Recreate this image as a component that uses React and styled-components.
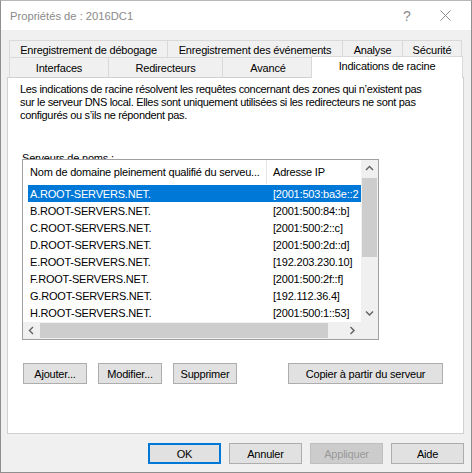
import React from "react";
import styled, { createGlobalStyle } from "styled-components";

const Global = createGlobalStyle`
  html, body { margin: 0; padding: 0; background: #ffffff; }
  body {
    font-family: "Liberation Sans", Arial, sans-serif;
    font-size: 11px;
    letter-spacing: -0.2px;
    color: #000;
  }
  * { box-sizing: border-box; }
`;

const Window = styled.div`
  width: 472px;
  height: 473px;
  border: 1px solid #8f8f8f;
  border-top-color: #b8b8b8;
  background: #f0f0f0;
  display: flex;
  flex-direction: column;
  overflow: hidden;
`;

const TitleBar = styled.div`
  height: 29px;
  flex: none;
  background: #ffffff;
  display: flex;
  align-items: center;
  padding: 0 3px 0 9px;
`;

const Title = styled.div`
  flex: 1;
  color: #8a8a8a;
  font-size: 11.2px;
  letter-spacing: 0;
`;

const CaptionButton = styled.div`
  width: ${(p) => p.$w}px;
  height: 29px;
  display: flex;
  align-items: center;
  justify-content: center;
  color: #8a8a8a;
  font-size: 14px;
  letter-spacing: 0;
`;

const Body = styled.div`
  flex: 1;
  display: flex;
  flex-direction: column;
  padding: 10px 7px 0 6px;
`;

const TabStrip = styled.div`
  display: flex;
  flex-direction: column;
  margin-left: 2px;
`;

const TabRow = styled.div`
  display: flex;
  align-items: flex-end;
  height: ${(p) => p.$h}px;
`;

const Tab = styled.div`
  width: ${(p) => p.$w}px;
  height: ${(p) => p.$h}px;
  flex: none;
  display: flex;
  align-items: center;
  justify-content: center;
  white-space: nowrap;
  padding-top: ${(p) => p.$pt || 0}px;
  background: #f0f0f0;
  border-top: 1px solid #d9d9d9;
  border-left: 1px solid #d9d9d9;
  border-right: ${(p) => (p.$last ? "1px solid #d9d9d9" : "none")};
`;

const ActiveTab = styled(Tab)`
  position: relative;
  z-index: 2;
  background: #ffffff;
  border-right: 1px solid #d9d9d9;
  margin-bottom: -1px;
  margin-left: -2px;
  padding-bottom: 3px;
`;

const Panel = styled.div`
  position: relative;
  z-index: 1;
  width: 457px;
  height: 357px;
  flex: none;
  background: #ffffff;
  border: 1px solid #d0d0d0;
  padding: 5px 12px 0 12px;
  display: flex;
  flex-direction: column;
`;

const Description = styled.p`
  margin: 0;
  line-height: 13px;
  letter-spacing: -0.33px;
  white-space: nowrap;
`;

const GroupLabel = styled.div`
  margin: 30px 0 -6px 2px;
  line-height: 13px;
`;

const ListBox = styled.div`
  position: relative;
  margin-left: 2px;
  width: 357px;
  height: 181px;
  border: 1px solid #a0a0a0;
  background: #ffffff;
  display: grid;
  grid-template-columns: 338px 17px;
  grid-template-rows: 162px 17px;
`;

const ListContent = styled.div`
  overflow: hidden;
  display: flex;
  flex-direction: column;
`;

const HeaderRow = styled.div`
  height: 24px;
  flex: none;
  display: flex;
  white-space: nowrap;
`;

const HeaderCell = styled.div`
  width: ${(p) => p.$w}px;
  flex: none;
  display: flex;
  align-items: center;
  padding-left: ${(p) => p.$pl}px;
  border-right: ${(p) => (p.$divider ? "1px solid #e5e5e5" : "none")};
`;

const Rows = styled.div`
  padding-top: 1px;
  display: flex;
  flex-direction: column;
`;

const Row = styled.div`
  height: 17px;
  flex: none;
  margin-left: 5px;
  width: 333px;
  display: flex;
  align-items: center;
  white-space: nowrap;
  overflow: hidden;
  background: ${(p) => (p.$selected ? "#0078d7" : "transparent")};
  color: ${(p) => (p.$selected ? "#ffffff" : "#000000")};
`;

const Cell = styled.div`
  width: ${(p) => p.$w}px;
  flex: none;
  overflow: hidden;
  padding-left: ${(p) => p.$pl}px;
`;

const VScroll = styled.div`
  background: #f0f0f0;
  display: flex;
  flex-direction: column;
`;

const HScroll = styled.div`
  background: #f0f0f0;
  display: flex;
`;

const Corner = styled.div`
  background: #f0f0f0;
`;

const ArrowBox = styled.div`
  width: 17px;
  height: 17px;
  flex: none;
  display: flex;
  align-items: center;
  justify-content: center;
`;

const Thumb = styled.div`
  background: #cdcdcd;
  ${(p) =>
    p.$vertical
      ? `height: ${p.$len}px; margin: 1px 1px 0 1px;`
      : `width: ${p.$len}px; margin: 1px 0 1px 0;`}
`;

const Track = styled.div`
  flex: 1;
`;

const ButtonRow = styled.div`
  display: flex;
  margin: 23px 0 0 3px;
`;

const Button = styled.div`
  width: ${(p) => p.$w}px;
  height: 21px;
  flex: none;
  margin-left: ${(p) => p.$ml || 0}px;
  display: flex;
  align-items: center;
  justify-content: center;
  white-space: nowrap;
  background: ${(p) => (p.$disabled ? "#cccccc" : "#e1e1e1")};
  color: ${(p) => (p.$disabled ? "#9a9a9a" : "#000000")};
  border: 1px solid
    ${(p) => (p.$default ? "#0078d7" : p.$disabled ? "#bfbfbf" : "#adadad")};
  box-shadow: ${(p) => (p.$default ? "inset 0 0 0 1px #0078d7" : "none")};
`;

const Footer = styled.div`
  display: flex;
  justify-content: flex-end;
  gap: 8px;
  margin-top: 9px;
`;

const Chevron = ({ dir }) => {
  const pts = {
    up: "1,5 4.5,1.5 8,5",
    down: "1,1.5 4.5,5 8,1.5",
    left: "5,1 1.5,4.5 5,8",
    right: "1.5,1 5,4.5 1.5,8",
  }[dir];
  const vertical = dir === "up" || dir === "down";
  return (
    <svg width={vertical ? 9 : 7} height={vertical ? 7 : 9} viewBox={vertical ? "0 0 9 7" : "0 0 7 9"}>
      <polyline points={pts} fill="none" stroke="#606060" strokeWidth="1.4" />
    </svg>
  );
};

const CloseGlyph = () => (
  <svg width="11" height="11" viewBox="0 0 11 11">
    <path d="M0.5 0.5 L10.5 10.5 M10.5 0.5 L0.5 10.5" stroke="#8a8a8a" strokeWidth="1" fill="none" />
  </svg>
);

const topTabs = [
  { label: "Enregistrement de débogage", w: 158 },
  { label: "Enregistrement des événements", w: 175 },
  { label: "Analyse", w: 60 },
  { label: "Sécurité", w: 60 },
];

const bottomTabs = [
  { label: "Interfaces", w: 99 },
  { label: "Redirecteurs", w: 114 },
  { label: "Avancé", w: 91 },
];

const servers = [
  ["A.ROOT-SERVERS.NET.", "[2001:503:ba3e::2"],
  ["B.ROOT-SERVERS.NET.", "[2001:500:84::b]"],
  ["C.ROOT-SERVERS.NET.", "[2001:500:2::c]"],
  ["D.ROOT-SERVERS.NET.", "[2001:500:2d::d]"],
  ["E.ROOT-SERVERS.NET.", "[192.203.230.10]"],
  ["F.ROOT-SERVERS.NET.", "[2001:500:2f::f]"],
  ["G.ROOT-SERVERS.NET.", "[192.112.36.4]"],
  ["H.ROOT-SERVERS.NET.", "[2001:500:1::53]"],
];

export default function App() {
  return (
    <>
      <Global />
      <Window>
        <TitleBar>
          <Title>Propriétés de : 2016DC1</Title>
          <CaptionButton $w={30}>?</CaptionButton>
          <CaptionButton $w={46}>
            <CloseGlyph />
          </CaptionButton>
        </TitleBar>
        <Body>
          <TabStrip>
            <TabRow $h={17}>
              {topTabs.map((t, i) => (
                <Tab key={t.label} $w={t.w} $h={17} $pt={2} $last={i === topTabs.length - 1}>
                  {t.label}
                </Tab>
              ))}
            </TabRow>
            <TabRow $h={20}>
              {bottomTabs.map((t) => (
                <Tab key={t.label} $w={t.w} $h={20} $pt={1}>
                  {t.label}
                </Tab>
              ))}
              <ActiveTab $w={152} $h={22}>
                Indications de racine
              </ActiveTab>
            </TabRow>
          </TabStrip>
          <Panel>
            <Description>
              Les indications de racine résolvent les requêtes concernant des zones qui n’existent pas
              <br />
              sur le serveur DNS local. Elles sont uniquement utilisées si les redirecteurs ne sont pas
              <br />
              configurés ou s’ils ne répondent pas.
            </Description>
            <GroupLabel>Serveurs de noms :</GroupLabel>
            <ListBox>
              <ListContent>
                <HeaderRow>
                  <HeaderCell $w={244} $pl={7} $divider>
                    Nom de domaine pleinement qualifié du serveu...
                  </HeaderCell>
                  <HeaderCell $w={94} $pl={6}>
                    Adresse IP
                  </HeaderCell>
                </HeaderRow>
                <Rows>
                  {servers.map(([name, ip], i) => (
                    <Row key={name} $selected={i === 0}>
                      <Cell $w={239} $pl={2}>
                        {name}
                      </Cell>
                      <Cell $w={94} $pl={6}>
                        {ip}
                      </Cell>
                    </Row>
                  ))}
                </Rows>
              </ListContent>
              <VScroll>
                <ArrowBox>
                  <Chevron dir="up" />
                </ArrowBox>
                <Thumb $vertical $len={79} />
                <Track />
                <ArrowBox>
                  <Chevron dir="down" />
                </ArrowBox>
              </VScroll>
              <HScroll>
                <ArrowBox>
                  <Chevron dir="left" />
                </ArrowBox>
                <Thumb $len={288} />
                <Track />
                <ArrowBox>
                  <Chevron dir="right" />
                </ArrowBox>
              </HScroll>
              <Corner />
            </ListBox>
            <ButtonRow>
              <Button $w={64}>Ajouter...</Button>
              <Button $w={64} $ml={11}>
                Modifier...
              </Button>
              <Button $w={64} $ml={11}>
                Supprimer
              </Button>
              <Button $w={155} $ml={51}>
                Copier à partir du serveur
              </Button>
            </ButtonRow>
          </Panel>
          <Footer>
            <Button $w={73} $default>
              OK
            </Button>
            <Button $w={73}>Annuler</Button>
            <Button $w={73} $disabled>
              Appliquer
            </Button>
            <Button $w={73}>Aide</Button>
          </Footer>
        </Body>
      </Window>
    </>
  );
}
